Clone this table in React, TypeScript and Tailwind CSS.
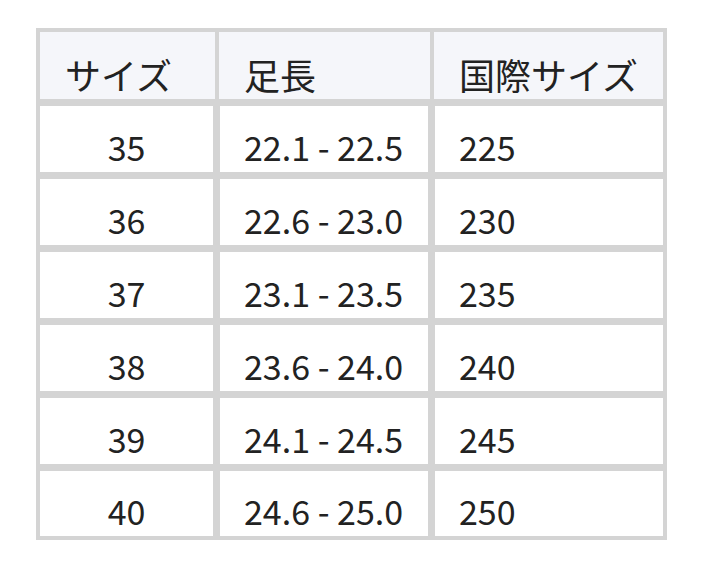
const rows = [
  { size: '35', foot: '22.1 - 22.5', intl: '225' },
  { size: '36', foot: '22.6 - 23.0', intl: '230' },
  { size: '37', foot: '23.1 - 23.5', intl: '235' },
  { size: '38', foot: '23.6 - 24.0', intl: '240' },
  { size: '39', foot: '24.1 - 24.5', intl: '245' },
  { size: '40', foot: '24.6 - 25.0', intl: '250' },
];

const head = 'flex items-end pb-[7px] pl-[25px] bg-[#f5f6fa] text-[36px]';
const cell = 'flex items-end pb-[8px] bg-white text-[34px]';

export default function App() {
  return (
    <div
      className="min-h-screen bg-white pl-[36px] pt-[28px] text-[#222] font-normal leading-none"
      style={{ fontFamily: '"Noto Sans CJK JP", "Noto Sans", sans-serif' }}
    >
      <div className="w-[631px] bg-[#d4d4d4] p-[4px] flex flex-col gap-[7px]">
        {/* header */}
        <div className="grid grid-cols-[175px_211px_229px] gap-x-[4px] h-[67px]">
          <div className={head}>サイズ</div>
          <div className={head}>足長</div>
          <div className={head}>国際サイズ</div>
        </div>

        {rows.map((r, i) => (
          <div
            key={r.size}
            className={`grid grid-cols-[173px_208px_228px] gap-x-[7px] ${i === rows.length - 1 ? 'h-[65px]' : 'h-[66px]'}`}
          >
            <div className={`${cell} justify-center`}>{r.size}</div>
            <div className={`${cell} pl-[24px]`}>{r.foot}</div>
            <div className={`${cell} pl-[24px]`}>{r.intl}</div>
          </div>
        ))}
      </div>
    </div>
  );
}
